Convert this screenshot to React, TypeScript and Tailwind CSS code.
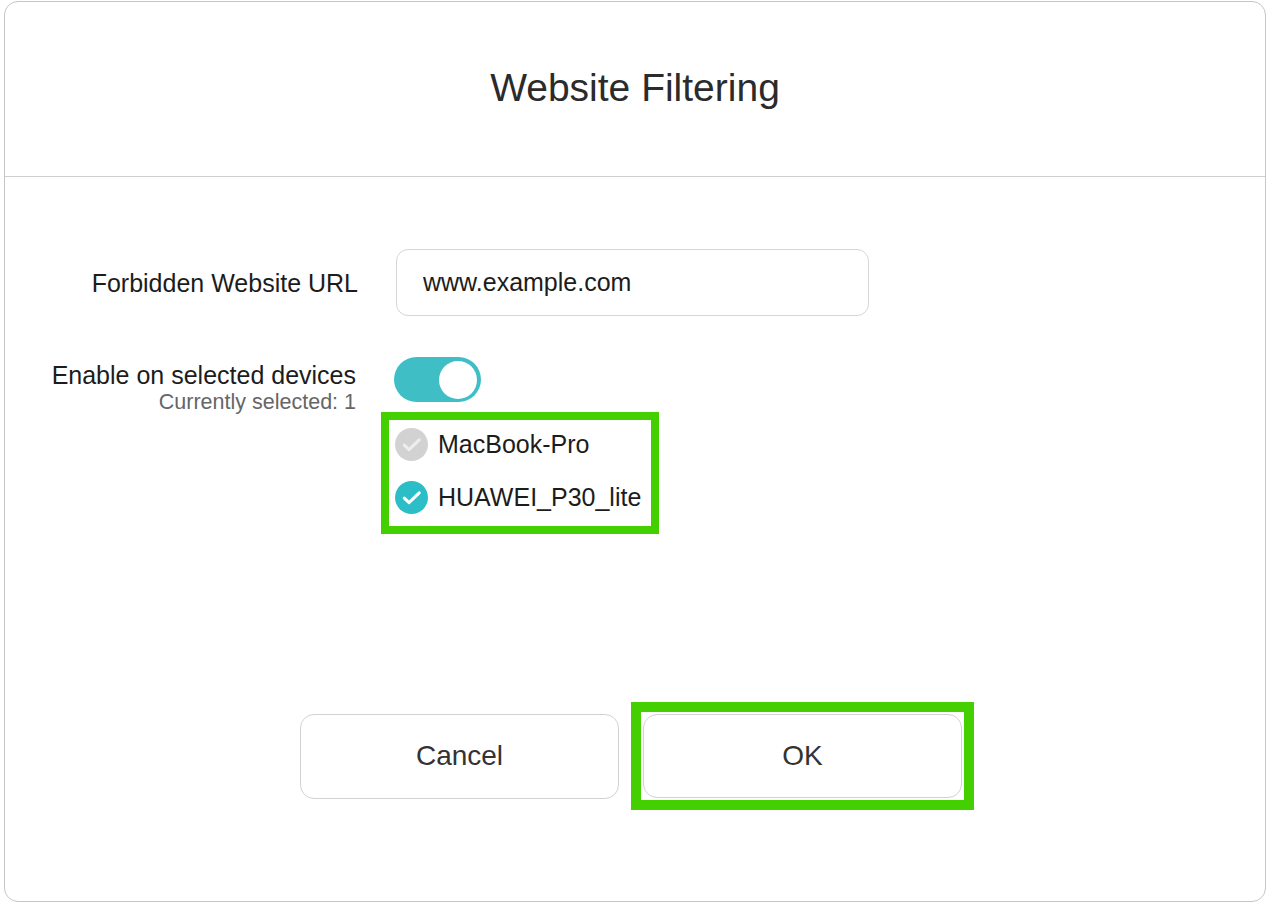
import { useState } from "react";

const devices = [
  { name: "MacBook-Pro", checked: false },
  { name: "HUAWEI_P30_lite", checked: true },
];

function CheckCircle({ checked }: { checked: boolean }) {
  return (
    <span
      className={`flex h-[33px] w-[33px] shrink-0 items-center justify-center rounded-full ${
        checked ? "bg-[#2bbec7]" : "bg-[#d2d2d2]"
      }`}
    >
      <svg viewBox="0 0 32 32" className="h-[33px] w-[33px]" fill="none">
        <path
          d="M9 16.5l4.6 4.4L23.5 11.5"
          stroke={checked ? "#ffffff" : "#ededed"}
          strokeWidth="3"
          strokeLinecap="round"
          strokeLinejoin="round"
        />
      </svg>
    </span>
  );
}

export default function App() {
  const [enabled, setEnabled] = useState(true);
  const [url, setUrl] = useState("www.example.com");

  return (
    <div className="h-[906px] w-[1272px] bg-white pl-[4px] pt-[1px] font-['Liberation_Sans',Arial,sans-serif]">
      <div className="flex h-[901px] w-[1262px] flex-col rounded-[14px] border border-[#c6c6c6] bg-white">
        <div className="flex h-[175px] shrink-0 items-center justify-center border-b border-[#cfcfcf] pb-[4px]">
          <h1 className="text-[39px] leading-none text-[#2b2b2b]">Website Filtering</h1>
        </div>

        <div className="flex flex-1 flex-col pt-[72px]">
          <div className="flex items-center">
            <label className="w-[353px] shrink-0 text-right text-[25px] leading-[30px] text-[#1c1c1c]">
              Forbidden Website URL
            </label>
            <input
              value={url}
              onChange={(e) => setUrl(e.target.value)}
              className="ml-[38px] h-[67px] w-[473px] rounded-[12px] border border-[#d6d6d6] px-[26px] text-[25px] text-[#1c1c1c] outline-none"
            />
          </div>

          <div className="mt-[41px] flex items-start">
            <div className="flex w-[351px] shrink-0 flex-col items-end pt-[3px]">
              <span className="text-[25px] leading-[30px] text-[#1c1c1c]">Enable on selected devices</span>
              <span className="mt-[-1px] text-[21.5px] leading-[26px] text-[#666666]">Currently selected: 1</span>
            </div>
            <div className="ml-[38px] flex flex-col">
              <button
                onClick={() => setEnabled(!enabled)}
                className={`flex h-[45px] w-[87px] items-center rounded-full px-[4px] ${
                  enabled ? "justify-end bg-[#3fbfc5]" : "justify-start bg-[#d2d2d2]"
                }`}
              >
                <span className="h-[38px] w-[38px] rounded-full bg-white" />
              </button>
              <div className="ml-[-13px] mt-[10px] flex flex-col gap-[20px] border-[8px] border-[#44cf00] pb-[12px] pl-[6px] pr-[10px] pt-[8px]">
                {devices.map((d) => (
                  <div key={d.name} className="flex h-[33px] items-center gap-[10px]">
                    <CheckCircle checked={d.checked} />
                    <span className="text-[25px] leading-none text-[#1c1c1c]">{d.name}</span>
                  </div>
                ))}
              </div>
            </div>
          </div>

          <div className="mt-[168px] flex items-center pl-[295px]">
            <button className="h-[85px] w-[319px] rounded-[14px] border border-[#d2d2d2] bg-white text-[28px] text-[#333333]">
              Cancel
            </button>
            <div className="ml-[12px] border-[10px] border-[#44cf00] p-[2px]">
              <button className="h-[84px] w-[319px] rounded-[14px] border border-[#d2d2d2] bg-white text-[28px] text-[#333333]">
                OK
              </button>
            </div>
          </div>
        </div>
      </div>
    </div>
  );
}
